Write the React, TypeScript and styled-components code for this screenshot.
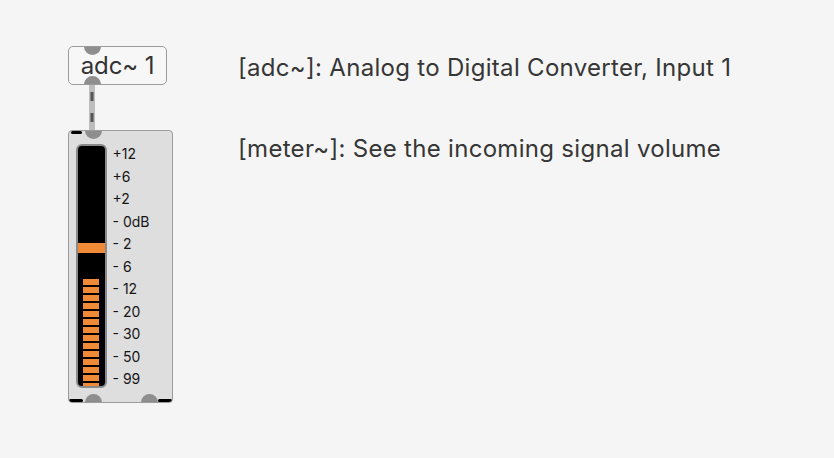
import React from "react";
import styled, { createGlobalStyle } from "styled-components";

const Global = createGlobalStyle`
  html, body { margin: 0; padding: 0; background: #f5f5f5; }
  body { font-family: Inter, "Noto Sans", sans-serif; }
`;

const Canvas = styled.div`
  width: 834px;
  height: 458px;
  box-sizing: border-box;
  padding: 46px 0 0 68px;
  background: #f5f5f5;
  overflow: hidden;
  display: flex;
  align-items: flex-start;
  gap: 65px;
`;

const ObjectColumn = styled.div`
  display: flex;
  flex-direction: column;
  align-items: flex-start;
  width: 105px;
  flex: none;
`;

const CommentColumn = styled.div`
  display: flex;
  flex-direction: column;
  gap: 53px;
  padding-top: 8px;
`;

const ObjectBox = styled.div`
  position: relative;
  width: 99px;
  height: 39px;
  box-sizing: border-box;
  border: 1.5px solid #9b9b9b;
  border-radius: 5px;
  background: #f7f7f7;
  overflow: hidden;
  display: flex;
  align-items: center;
  justify-content: center;
`;

const ObjectLabel = styled.span`
  font-family: Inter, "Noto Sans", sans-serif;
  font-size: 24px;
  letter-spacing: -0.1px;
  color: #333333;
  line-height: 1;
  margin-top: 1px;
`;

const Port = styled.div<{ $x: number; $edge: "top" | "bottom" }>`
  position: absolute;
  left: ${(p) => p.$x - 8}px;
  ${(p) => (p.$edge === "top" ? "top: -9px;" : "bottom: -9px;")}
  width: 17px;
  height: 17px;
  border-radius: 50%;
  background: #8e8e8e;
`;

const Pill = styled.div<{ $x: number; $edge: "top" | "bottom"; $w: number }>`
  position: absolute;
  left: ${(p) => p.$x}px;
  ${(p) => (p.$edge === "top" ? "top: 0px;" : "bottom: 0px;")}
  width: ${(p) => p.$w}px;
  height: 3px;
  border-radius: 2px;
  background: #000;
`;

const Cable = styled.svg`
  display: block;
  margin: -1px 0 -1px 20px;
`;

const MeterBox = styled.div`
  position: relative;
  width: 105px;
  height: 273px;
  box-sizing: border-box;
  border: 1.5px solid #9b9b9b;
  border-radius: 4px;
  background: #dedede;
  overflow: hidden;
  display: flex;
  padding: 12px 0 0 6.5px;
  gap: 6px;
`;

const MeterBar = styled.div`
  margin-top: 1px;
  width: 31px;
  height: 244px;
  box-sizing: border-box;
  border: 2px solid #8a8a8a;
  border-radius: 6px;
  background: #000;
  flex: none;
  display: flex;
  flex-direction: column;
  align-items: stretch;
  overflow: hidden;
`;

const PeakMark = styled.div`
  margin-top: 97px;
  height: 10px;
  flex: none;
  background: #f08a36;
`;

const Segments = styled.div`
  margin-top: 26px;
  align-self: center;
  width: 16px;
  flex: 1;
  display: flex;
  flex-direction: column;
  gap: 2px;
  overflow: hidden;
`;

const Segment = styled.div`
  flex: none;
  height: 6px;
  background: #f08a36;
`;

const Scale = styled.div`
  display: flex;
  flex-direction: column;
`;

const ScaleLabel = styled.div`
  font-family: Inter, "Noto Sans", sans-serif;
  font-size: 14px;
  line-height: 22.5px;
  color: #151515;
  white-space: pre;
`;

const Comment = styled.div`
  font-family: Inter, "Noto Sans", sans-serif;
  font-size: 24px;
  letter-spacing: 0.3px;
  line-height: 28px;
  color: #363636;
  white-space: nowrap;
`;

const labels = ["+12", "+6", "+2", "- 0dB", "- 2", "- 6", "- 12", "- 20", "- 30", "- 50", "- 99"];

export default function App() {
  return (
    <Canvas>
      <Global />
      <ObjectColumn>
        <ObjectBox>
          <Port $x={23} $edge="top" />
          <Port $x={23} $edge="bottom" />
          <ObjectLabel>adc~ 1</ObjectLabel>
        </ObjectBox>

        <Cable width="8" height="47" viewBox="0 0 8 47">
          <line x1="4" y1="0" x2="4" y2="47" stroke="#bdbdbd" strokeWidth="6" />
          <line x1="4" y1="8" x2="4" y2="47" stroke="#555" strokeWidth="3" strokeDasharray="9 12" />
        </Cable>

        <MeterBox>
          <Pill $x={2} $edge="top" $w={11} />
          <Pill $x={0} $edge="bottom" $w={14} />
          <Pill $x={89} $edge="bottom" $w={14} />
          <Port $x={24} $edge="top" />
          <Port $x={24} $edge="bottom" />
          <Port $x={80} $edge="bottom" />
          <MeterBar>
            <PeakMark />
            <Segments>
              {Array.from({ length: 14 }).map((_, i) => (
                <Segment key={i} />
              ))}
            </Segments>
          </MeterBar>
          <Scale>
            {labels.map((l) => (
              <ScaleLabel key={l}>{l}</ScaleLabel>
            ))}
          </Scale>
        </MeterBox>
      </ObjectColumn>

      <CommentColumn>
        <Comment>[adc~]: Analog to Digital Converter, Input 1</Comment>
        <Comment>[meter~]: See the incoming signal volume</Comment>
      </CommentColumn>
    </Canvas>
  );
}
